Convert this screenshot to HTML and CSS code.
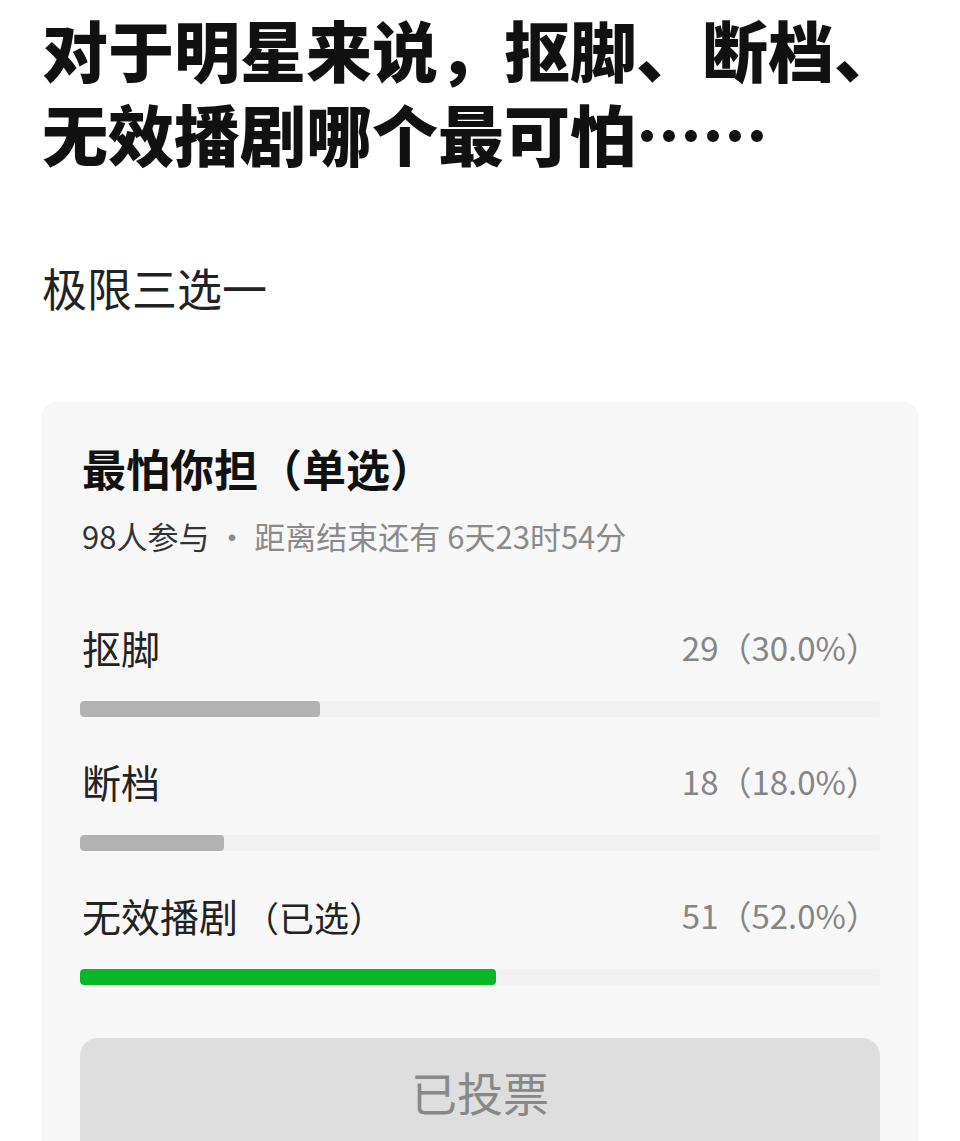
FILE: index.html
```html
<!DOCTYPE html>
<html lang="zh-CN">
<head>
    <meta charset="UTF-8">
    <meta name="viewport" content="width=device-width, initial-scale=1.0">
    <title>最怕你担</title>
    <link rel="stylesheet" href="styles.css">
</head>
<body>
    <h1 class="post-title">对于明星来说，抠脚、断档、无效播剧哪个最可怕……</h1>
    <p class="post-text">极限三选一</p>

    <div class="vote-card">
        <h2 class="vote-title">最怕你担（单选）</h2>
        <div class="vote-meta">
            <span class="vote-count">98人参与</span>
            <span class="vote-time"> · 距离结束还有 6天23时54分</span>
        </div>

        <div class="vote-options">
            <div class="vote-option">
                <div class="option-row">
                    <span class="option-name">抠脚</span>
                    <span class="option-result">29（30.0%）</span>
                </div>
                <div class="bar"><div class="bar-fill" style="width: 30%"></div></div>
            </div>

            <div class="vote-option">
                <div class="option-row">
                    <span class="option-name">断档</span>
                    <span class="option-result">18（18.0%）</span>
                </div>
                <div class="bar"><div class="bar-fill" style="width: 18%"></div></div>
            </div>

            <div class="vote-option selected">
                <div class="option-row">
                    <span class="option-name">无效播剧<span class="option-tag">（已选）</span></span>
                    <span class="option-result">51（52.0%）</span>
                </div>
                <div class="bar"><div class="bar-fill" style="width: 52%"></div></div>
            </div>
        </div>

        <button class="vote-button" disabled>已投票</button>
    </div>
</body>
</html>
```

FILE: styles.css
```css
body {
    font-family: "Noto Sans CJK SC", "Noto Sans", sans-serif;
    background-color: #fff;
    color: #111;
    margin: 0;
    padding: 6px 42px 0;
    overflow: hidden;
}

.post-title {
    font-size: 66px;
    line-height: 84px;
    font-weight: 900;
    margin: 0;
    color: #111;
}

.post-text {
    font-size: 45px;
    line-height: 56px;
    margin: 86px 0 0;
    color: #222;
}

.vote-card {
    margin-top: 86px;
    background-color: #f7f7f7;
    border-radius: 14px;
    padding: 38px 38px 0;
    height: 800px;
}

.vote-title {
    font-size: 44px;
    line-height: 56px;
    font-weight: 700;
    margin: 0 0 0 2px;
    color: #111;
}

.vote-meta {
    font-size: 31px;
    line-height: 40px;
    margin: 20px 0 0 2px;
    color: #8a8a8a;
}

.vote-count {
    color: #333;
}

.vote-options {
    display: flex;
    flex-direction: column;
    gap: 39px;
    margin-top: 66px;
}

.option-row {
    display: flex;
    justify-content: space-between;
    align-items: center;
    height: 50px;
    padding: 0 1px 0 2px;
}

.option-name {
    font-size: 39px;
    color: #222;
}

.option-tag {
    font-size: 35px;
    margin-left: 6px;
}

.option-result {
    font-size: 33px;
    color: #858585;
}

.bar {
    margin-top: 29px;
    height: 16px;
    border-radius: 4px;
    background-color: #f1f1f1;
    overflow: hidden;
}

.bar-fill {
    height: 100%;
    background-color: #b2b2b2;
    border-radius: 4px;
}

.selected .bar-fill {
    background-color: #08b628;
}

.vote-button {
    display: block;
    width: 100%;
    margin-top: 53px;
    height: 130px;
    border: none;
    border-radius: 18px;
    background-color: #dedede;
    color: #888;
    font-family: inherit;
    font-size: 46px;
    padding: 0 0 24px;
}
```
